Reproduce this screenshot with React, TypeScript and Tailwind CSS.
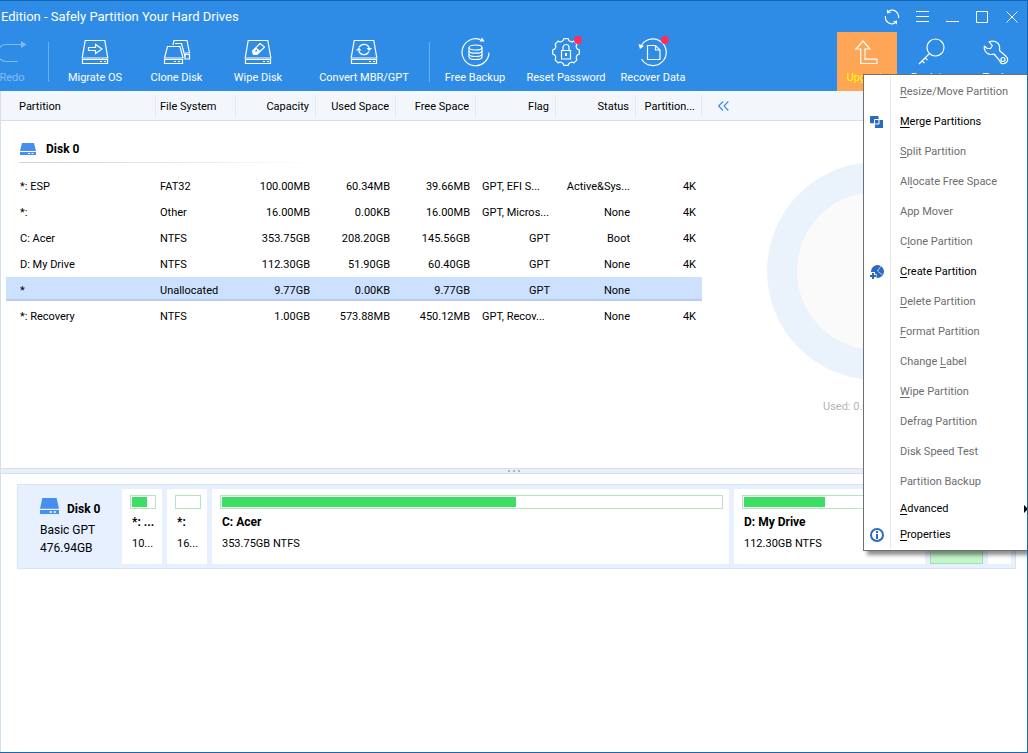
import React from 'react';
import clsx from 'clsx';

interface PartitionRow {
  name: string;
  fs: string;
  capacity: string;
  used: string;
  free: string;
  flag: string;
  status: string;
  alignment: string;
  selected?: boolean;
}

interface ToolItem {
  label: string;
  width: string;
  icon: React.ReactNode;
  badge?: boolean;
}

interface MenuItem {
  label: string;
  // index of the underlined access key, -1 for none
  key: number;
  enabled?: boolean;
  icon?: React.ReactNode;
  submenu?: boolean;
  compact?: boolean;
}

const columns = [
  { title: 'Partition', width: 'w-[155px]', align: 'text-left pl-[18px]' },
  { title: 'File System', width: 'w-[80px]', align: 'text-left pl-1' },
  { title: 'Capacity', width: 'w-[80px]', align: 'text-right pr-[6px]' },
  { title: 'Used Space', width: 'w-[80px]', align: 'text-right pr-[6px]' },
  { title: 'Free Space', width: 'w-[80px]', align: 'text-right pr-[6px]' },
  { title: 'Flag', width: 'w-[80px]', align: 'text-right pr-[6px]' },
  { title: 'Status', width: 'w-[80px]', align: 'text-right pr-[6px]' },
  { title: 'Partition...', width: 'w-[66px]', align: 'text-right pr-[6px]' },
];

const rows: PartitionRow[] = [
  { name: '*: ESP', fs: 'FAT32', capacity: '100.00MB', used: '60.34MB', free: '39.66MB', flag: 'GPT, EFI S...', status: 'Active&Sys...', alignment: '4K' },
  { name: '*:', fs: 'Other', capacity: '16.00MB', used: '0.00KB', free: '16.00MB', flag: 'GPT, Micros...', status: 'None', alignment: '4K' },
  { name: 'C: Acer', fs: 'NTFS', capacity: '353.75GB', used: '208.20GB', free: '145.56GB', flag: 'GPT', status: 'Boot', alignment: '4K' },
  { name: 'D: My Drive', fs: 'NTFS', capacity: '112.30GB', used: '51.90GB', free: '60.40GB', flag: 'GPT', status: 'None', alignment: '4K' },
  { name: '*', fs: 'Unallocated', capacity: '9.77GB', used: '0.00KB', free: '9.77GB', flag: 'GPT', status: 'None', alignment: '', selected: true },
  { name: '*: Recovery', fs: 'NTFS', capacity: '1.00GB', used: '573.88MB', free: '450.12MB', flag: 'GPT, Recov...', status: 'None', alignment: '4K' },
];

const blocks = [
  { name: '*: ...', size: '10...', used: 66, width: 'w-[40px]' },
  { name: '*:', size: '16...', used: 0, width: 'w-[40px]' },
  { name: 'C: Acer', size: '353.75GB NTFS', used: 59, width: 'grow-[503] basis-0' },
  { name: 'D: My Drive', size: '112.30GB NTFS', used: 47, width: 'grow-[177] basis-0' },
];

/* ---------- icons ---------- */

function Glyph({ children }: { children: React.ReactNode }) {
  return (
    <svg width="30" height="30" viewBox="0 0 30 30" fill="none" stroke="currentColor" strokeWidth="1.2" aria-hidden="true">
      {children}
    </svg>
  );
}

function DriveOutline() {
  return (
    <>
      <path d="M5.2 3.500h19.600l3 17.500H2.200z" />
      <path d="M2.500 22.500h25v4h-25z" />
      <path d="M20 24.500h2M24 24.500h2" />
    </>
  );
}

const RedoIcon = (
  <Glyph>
    <path d="M25 7.500H9a8.500 8.500 0 0 0 0 17h12" />
    <path d="M24 4l5.500 3.500-5.500 3.500z" fill="currentColor" stroke="none" />
  </Glyph>
);

const MigrateIcon = (
  <Glyph>
    <DriveOutline />
    <path d="M8.500 10.500h7v-3l6.500 4.500-6.500 4.500v-3h-7z" />
  </Glyph>
);

const CloneIcon = (
  <Glyph>
    <path d="M5.500 9.500h12.500l3 11.500H2.500z" />
    <path d="M2.500 22.500h18v4h-18z" />
    <path d="M12 24.500h2M16 24.500h2" />
    <path d="M11 8l1-4.500h13l2.500 12.500h-4.500" />
    <path d="M13 6.500h6.500l3.500 13" />
    <path d="M23 17.500h4.500v4.500H23z" />
  </Glyph>
);

const WipeIcon = (
  <Glyph>
    <DriveOutline />
    <path d="M9.500 14l7.500-7.500 4.500 3.500-7.500 7.500h-3.500z" strokeLinejoin="round" />
    <path d="M13 10.500l4.500 3.500-3.500 3.500h-3.500l-1-3.500z" fill="currentColor" stroke="none" />
    <path d="M12.500 14.500l1.500-1.500" stroke="#2e8ce6" />
  </Glyph>
);

const ConvertIcon = (
  <Glyph>
    <DriveOutline />
    <path d="M10 10.500a5.500 5.500 0 0 1 10.300 1" />
    <path d="M20 14.500a5.500 5.500 0 0 1-10.300-1" />
    <path d="M17.500 11h5.500l-2.700 3z" fill="currentColor" stroke="none" />
    <path d="M7 13.500h5.500l-2.800-3z" fill="currentColor" stroke="none" />
  </Glyph>
);

const BackupIcon = (
  <Glyph>
    <path d="M29 15.500a13.500 13.500 0 1 1-8.500-12.800" />
    <path d="M19.500 4.500L22 .5l2.500 4z" fill="currentColor" stroke="none" />
    <ellipse cx="15.500" cy="10.500" rx="6.500" ry="2.500" />
    <path d="M9 10.500v9.500c0 1.500 2.900 2.500 6.500 2.500s6.500-1 6.500-2.500v-9.500" />
    <path d="M9 13.700c0 1.500 2.900 2.500 6.500 2.500s6.500-1 6.500-2.500M9 17c0 1.500 2.900 2.500 6.500 2.500s6.500-1 6.500-2.500" />
  </Glyph>
);

const PasswordIcon = (
  <Glyph>
    <path
      d="M12.900 1.700h4.200a3.700 3.700 0 0 0 5.800 2.400l3 3a3.700 3.700 0 0 0 2.400 5.800v4.200a3.700 3.700 0 0 0-2.400 5.800l-3 3a3.700 3.700 0 0 0-5.800 2.400h-4.200a3.700 3.700 0 0 0-5.800-2.400l-3-3a3.700 3.700 0 0 0-2.400-5.800v-4.200a3.700 3.700 0 0 0 2.400-5.800l3-3a3.700 3.700 0 0 0 5.800-2.400z"
      strokeLinejoin="round"
    />
    <path d="M10.500 13.500h9v8.500h-9z" />
    <path d="M12 13.500v-3a3 3 0 0 1 6 0v3" />
    <path d="M14 16h2v3h-2z" fill="currentColor" stroke="none" />
  </Glyph>
);

const RecoverIcon = (
  <Glyph>
    <path d="M2.500 10.500a13.300 13.300 0 1 1 1 11.500" />
    <path d="M.5 7l1.500 5 4-3z" fill="currentColor" stroke="none" />
    <path d="M9.500 8.500h8l4.500 4.500v9.500H9.500z" />
    <path d="M17.500 8.500V13H22" />
  </Glyph>
);

const UpgradeIcon = (
  <Glyph>
    <path d="M11 4L4 12h4.700v14.500H25v-4.300H13V12h5z" />
  </Glyph>
);

const RegisterIcon = (
  <Glyph>
    <circle cx="19.500" cy="10.500" r="8.500" />
    <path d="M13.500 16.500L3 27M6 24l2.500 2M9 21l2.500 2" />
  </Glyph>
);

const ToolsIcon = (
  <Glyph>
    <path
      d="M8 4.700C13 3 17.800 5 18.500 9.500c.2 1.500 0 3 .2 4.300l6 5.200c2.300 2 2.500 4.500 1 6s-4 2-5.400 1.300c-1-.5-1-1.500-1.600-2.600L13 17c-1.500.5-3 .7-4.300.3-2-.5-3.500-1.500-4.400-3-.9-1.600-1.300-3.500-1-5.300L6 11.300l3.500.2 1.800-2.800z"
      strokeLinejoin="round"
    />
    <circle cx="22" cy="22.500" r="2" />
  </Glyph>
);

const MergeIcon = (
  <svg width="14" height="14" viewBox="0 0 14 14" aria-hidden="true">
    <rect x="0" y="1" width="9" height="7.500" rx="1" fill="#2b6abf" />
    <path d="M5 5h8v8H5z" fill="#2b6abf" />
    <path d="M9 .5v3h5M0 9h4v4.500" fill="none" stroke="#fff" />
    <path d="M4.500 4.500h4.500v4.500H4.500z" fill="#2b6abf" stroke="#fff" />
  </svg>
);

const CreateIcon = (
  <svg width="16" height="16" viewBox="0 0 16 16" aria-hidden="true">
    <circle cx="8.500" cy="7.500" r="6.500" fill="#2b6abf" />
    <path d="M12 2L8.500 7l5 4" fill="none" stroke="#b9cfee" />
    <path d="M4 8v7M.5 12h7" stroke="#fff" strokeWidth="4" />
    <path d="M4 9v6M1 12h6" stroke="#2b6abf" strokeWidth="2" />
  </svg>
);

const InfoIcon = (
  <svg width="14" height="14" viewBox="0 0 14 14" aria-hidden="true">
    <circle cx="7" cy="7" r="6" fill="none" stroke="#2b6abf" strokeWidth="2" />
    <path d="M7 3v2M7 6v5" stroke="#2b6abf" strokeWidth="2" />
  </svg>
);

function DiskIcon({ className }: { className: string }) {
  return (
    <svg className={className} viewBox="0 0 16 12" preserveAspectRatio="none" aria-hidden="true">
      <path d="M2 0h12l2 8H0zM0 9h16v3H0z" fill="#468ff0" />
      <path d="M8 10.500h2M11.500 10.500h2" stroke="#fff" />
    </svg>
  );
}

/* ---------- data that needs the icons ---------- */

const diskTools: ToolItem[] = [
  { label: 'Migrate OS', width: 'w-[82px]', icon: MigrateIcon },
  { label: 'Clone Disk', width: 'w-[81px]', icon: CloneIcon },
  { label: 'Wipe Disk', width: 'w-[82px]', icon: WipeIcon },
  { label: 'Convert MBR/GPT', width: 'w-[130px]', icon: ConvertIcon },
];

const extraTools: ToolItem[] = [
  { label: 'Free Backup', width: 'w-[90px]', icon: BackupIcon },
  { label: 'Reset Password', width: 'w-[92px]', icon: PasswordIcon, badge: true },
  { label: 'Recover Data', width: 'w-[82px]', icon: RecoverIcon, badge: true },
];

const menuItems: MenuItem[] = [
  { label: 'Resize/Move Partition', key: 0 },
  { label: 'Merge Partitions', key: 0, enabled: true, icon: MergeIcon },
  { label: 'Split Partition', key: 0 },
  { label: 'Allocate Free Space', key: 2 },
  { label: 'App Mover', key: -1 },
  { label: 'Clone Partition', key: 1 },
  { label: 'Create Partition', key: 0, enabled: true, icon: CreateIcon },
  { label: 'Delete Partition', key: 0 },
  { label: 'Format Partition', key: 0 },
  { label: 'Change Label', key: 7 },
  { label: 'Wipe Partition', key: 0 },
  { label: 'Defrag Partition', key: -1 },
  { label: 'Disk Speed Test', key: -1 },
  { label: 'Partition Backup', key: -1 },
  { label: 'Advanced', key: 0, enabled: true, submenu: true, compact: true },
  { label: 'Properties', key: 0, enabled: true, icon: InfoIcon, compact: true },
];

/* ---------- parts ---------- */

function ToolButton({ label, width, icon, badge, className }: ToolItem & { className?: string }) {
  return (
    <button type="button" className={clsx('flex h-full shrink-0 flex-col items-center pt-[5px] whitespace-nowrap', width, className)}>
      <span className="relative">
        {icon}
        {badge && <span className="absolute -top-px -right-px size-2 rounded-full bg-[#ff2d5c]" />}
      </span>
      <span className="mt-[3px] leading-4">{label}</span>
    </button>
  );
}

function TitleBar() {
  const button = 'flex h-[30px] w-[30px] items-center justify-center';
  return (
    <div className="flex h-[31px] items-center justify-between">
      <h1 className="text-[13px] leading-4">Edition - Safely Partition Your Hard Drives</h1>
      <div className="flex">
        <button type="button" aria-label="Refresh" className={button}>
          <svg width="16" height="16" viewBox="0 0 16 16" fill="none" stroke="currentColor" strokeWidth="1.2">
            <path d="M5 2a6.500 6.500 0 0 1 9.500 7M11 14A6.500 6.500 0 0 1 1.500 7" />
            <path d="M3 .5v4l4-1zM13 15.500v-4l-4 1z" fill="currentColor" stroke="none" />
          </svg>
        </button>
        <button type="button" aria-label="Menu" className={button}>
          <svg width="13" height="13" viewBox="0 0 13 13" stroke="currentColor">
            <path d="M0 1.500h13M0 6.500h13M0 11.500h13" />
          </svg>
        </button>
        <button type="button" aria-label="Minimize" className={button}>
          <svg width="13" height="13" viewBox="0 0 13 13" stroke="currentColor">
            <path d="M0 11.500h13" />
          </svg>
        </button>
        <button type="button" aria-label="Maximize" className={button}>
          <svg width="12" height="12" viewBox="0 0 12 12" fill="none" stroke="currentColor">
            <path d="M.5.5h11v11H.5z" />
          </svg>
        </button>
        <button type="button" aria-label="Close" className={button}>
          <svg width="12" height="12" viewBox="0 0 12 12" stroke="currentColor">
            <path d="M.5.5l11 11M11.500.5l-11 11" />
          </svg>
        </button>
      </div>
    </div>
  );
}

function Toolbar() {
  return (
    <div className="flex h-[59px] items-center">
      <ToolButton label="Redo" width="w-[54px]" icon={RedoIcon} className="-ml-4 opacity-40" />
      <div className="ml-[9px] h-10 w-px bg-[#6db0ef]" />
      <div className="ml-[5px] flex h-full">
        {diskTools.map((tool) => (
          <ToolButton key={tool.label} {...tool} />
        ))}
      </div>
      <div className="h-10 w-px bg-[#6db0ef]" />
      <div className="flex h-full">
        {extraTools.map((tool) => (
          <ToolButton key={tool.label} {...tool} />
        ))}
      </div>
      <div className="ml-auto flex h-full">
        <ToolButton label="Upgrade" width="w-[60px]" icon={UpgradeIcon} className="bg-[#ffa556] [&>span:last-child]:text-[#ffff00]" />
        <ToolButton label="Register" width="w-[68px]" icon={RegisterIcon} />
        <ToolButton label="Tools" width="w-[62px]" icon={ToolsIcon} />
      </div>
    </div>
  );
}

function PartitionTable() {
  return (
    <table className="w-[701px] shrink-0 table-fixed border-separate border-spacing-0 self-start">
      <thead>
        <tr>
          {columns.map((col) => (
            <th key={col.title} className={clsx('h-[30px] border-b border-[#d3dfec] bg-[#f3f7fc] p-0 font-normal', col.width)}>
              <div className={clsx('h-[22px] border-r border-[#e3e8ee] leading-6 whitespace-nowrap', col.align)}>{col.title}</div>
            </th>
          ))}
        </tr>
      </thead>
      <tbody>
        <tr>
          <th colSpan={8} className="h-[52px] p-0 pl-[18px] text-left align-top">
            <div className="flex h-[42px] w-[300px] flex-col justify-end">
              <div className="flex items-center gap-[10px] pb-[5px] pl-px">
                <DiskIcon className="h-3 w-4" />
                <span className="text-[12px] leading-4">Disk 0</span>
              </div>
              <div className="h-px bg-linear-to-r from-[#c6d1de] to-white" />
            </div>
          </th>
        </tr>
        {rows.map((row) => (
          <tr
            key={row.name}
            className={clsx(
              '[&>td]:h-[26px] [&>td]:border-b-2 [&>td]:border-white [&>td]:p-0 [&>td]:pt-[3px] [&>td]:whitespace-nowrap',
              row.selected && '[&>td]:bg-[#cce1ff] [&>td]:shadow-[inset_0_-2px_0_#b9cdeb]'
            )}
          >
            <td className="border-l-[5px]">
              <div className="pl-[14px]">{row.name}</div>
            </td>
            <td>
              <div className="pl-1">{row.fs}</div>
            </td>
            {[row.capacity, row.used, row.free].map((value, i) => (
              <td key={i}>
                <div className="pr-[6px] text-right">{value}</div>
              </td>
            ))}
            <td>
              <div className={row.flag === 'GPT' ? 'pr-[6px] text-right' : 'pl-[6px]'}>{row.flag}</div>
            </td>
            <td>
              <div className="pr-[6px] text-right">{row.status}</div>
            </td>
            <td>
              <div className="pr-[6px] text-right">{row.alignment}</div>
            </td>
          </tr>
        ))}
      </tbody>
    </table>
  );
}

function UsagePane() {
  return (
    <div className="flex min-w-0 flex-1 flex-col">
      <div className="flex h-[30px] items-center border-b border-[#d3dfec] bg-[#f3f7fc] pl-4">
        <button type="button" aria-label="Collapse">
          <svg width="11" height="10" viewBox="0 0 11 10" fill="none" stroke="#3f8ef0" strokeWidth="1.2">
            <path d="M5 .5L.7 5 5 9.500M10.300.5L6 5l4.300 4.500" />
          </svg>
        </button>
      </div>
      <div className="ml-[65px] flex w-[218px] flex-col items-center pt-[41px]">
        <svg width="218" height="218" viewBox="0 0 218 218" aria-hidden="true">
          <circle cx="109" cy="109" r="94" fill="#fafafa" stroke="#eaf2fb" strokeWidth="30" />
        </svg>
        <p className="mt-[19px] w-[106px] leading-4 text-[#b4b4b4]">Used: 0.00KB</p>
      </div>
    </div>
  );
}

function DiskMap() {
  return (
    <div className="mt-[10px] mr-[11px] ml-4 flex h-[85px] gap-[5px] border border-[#d9e5f4] bg-[#e6f0ff] p-1">
      <div className="w-[95px] shrink-0 pt-[7px] pl-[18px] text-[12px] leading-[18px]">
        <div className="flex items-end gap-2">
          <DiskIcon className="mb-[3px] h-4 w-[19px]" />
          <strong className="mt-[5px] leading-4">Disk 0</strong>
        </div>
        <p className="mt-[4px]">Basic GPT</p>
        <p>476.94GB</p>
      </div>
      {blocks.map((block) => (
        <div key={block.name} className={clsx('overflow-hidden bg-white pt-[6px] pr-[6px] pl-2 whitespace-nowrap', block.width)}>
          <div className="h-[14px] border border-[#b5e6c1] p-px">
            <div className="h-full bg-[#3bdf63]" style={{ width: `${block.used}%` }} />
          </div>
          <p className="mt-[5px] pl-[2px] text-[12px] leading-4 font-bold">{block.name}</p>
          <p className="mt-[6px] pl-[2px] leading-4">{block.size}</p>
        </div>
      ))}
      <div className="w-[53px] shrink-0 border border-[#a6dfb2] bg-[#c3f6ca]" />
      <div className="w-[23px] shrink-0 bg-white" />
    </div>
  );
}

function MenuLabel({ label, accessKey }: { label: string; accessKey: number }) {
  if (accessKey < 0) return <span>{label}</span>;
  return (
    <span>
      {label.slice(0, accessKey)}
      <u className="underline-offset-2">{label[accessKey]}</u>
      {label.slice(accessKey + 1)}
    </span>
  );
}

function ContextMenu() {
  return (
    <div
      role="menu"
      className="absolute top-[73px] -right-px flex w-[165px] flex-col border border-r-0 border-[#707070] bg-white pt-px pb-[2px] shadow-[4px_4px_4px_rgba(0,0,0,0.45)]"
    >
      {menuItems.map((item) => (
        <button
          key={item.label}
          type="button"
          role="menuitem"
          disabled={!item.enabled}
          className={clsx(
            'flex items-center text-left whitespace-nowrap',
            item.compact ? 'h-[26px]' : 'h-[30px] [&>span]:pt-[2px]',
            item.enabled ? 'text-black' : 'text-[#6d6d6d]'
          )}
        >
          <span className="flex h-full w-[27px] shrink-0 items-center justify-center border-r border-[#e2e8f0]">{item.icon}</span>
          <span className="flex-1 pl-[9px]">
            <MenuLabel label={item.label} accessKey={item.key} />
          </span>
          {item.submenu && (
            <svg width="4" height="8" viewBox="0 0 4 8" aria-hidden="true">
              <path d="M0 0l4 4-4 4z" />
            </svg>
          )}
        </button>
      ))}
    </div>
  );
}

export default function App() {
  return (
    <div className="relative flex min-h-screen flex-col overflow-hidden border-t border-r border-b border-[#1169b5] bg-white font-['Roboto','Noto_Sans',sans-serif] text-[11px] leading-4 text-black">
      <header className="bg-[#2e8ce6] pl-px text-white">
        <TitleBar />
        <Toolbar />
      </header>
      <main className="flex flex-1 flex-col border-l border-[#d3dfec]">
        <section className="flex min-h-[377px]">
          <PartitionTable />
          <UsagePane />
        </section>
        <div className="flex h-[6px] items-center justify-center gap-[3px] border-y border-[#d3dfec] bg-[#e9eff6]">
          <span className="size-[2px] bg-[#a9b9c9]" />
          <span className="size-[2px] bg-[#a9b9c9]" />
          <span className="size-[2px] bg-[#a9b9c9]" />
        </div>
        <DiskMap />
      </main>
      <ContextMenu />
    </div>
  );
}
